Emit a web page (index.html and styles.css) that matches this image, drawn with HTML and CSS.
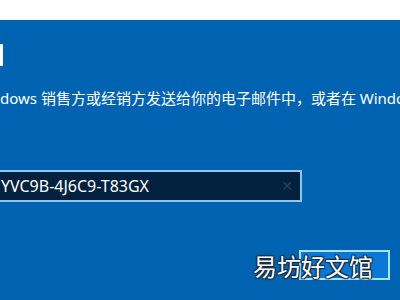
FILE: index.html
```html
<!DOCTYPE html>
<html lang="zh-CN">
  <head>
    <meta charset="UTF-8" />
    <meta name="viewport" content="width=device-width, initial-scale=1.0" />
    <title>输入产品密钥</title>
    <link rel="stylesheet" href="styles.css">
  </head>
  <body>
    <div class="topBar"></div>
    <div class="panel">
      <div class="titleEdge"></div>
      <p class="desc">dows 销售方或经销方发送给你的电子邮件中，或者在 Windows</p>
      <div class="keyBox">
        <span class="keyText">YVC9B-4J6C9-T83GX</span>
        <span class="clearBtn">✕</span>
      </div>
    </div>
    <!-- watermark on top of the shot -->
    <div class="markBox"></div>
    <div class="markText">易坊好文馆</div>
  </body>
</html>
```

FILE: styles.css
```css
html,
body {
  overflow: hidden;
}
body {
  margin: 0;
  width: 400px;
  height: 300px;
  background-color: #0063b1;
  font-family: "Noto Sans", "Noto Sans CJK SC", sans-serif;
  color: #fff;
  position: relative;
}

/* White strip at the top */
.topBar {
  height: 20px;
  background-color: #fff;
}

.panel {
  display: flex;
  flex-direction: column;
}

/* Tail of the clipped title */
.titleEdge {
  margin-top: 24px;
  width: 3px;
  height: 22px;
  background-color: #fff;
  border-radius: 0 1px 1px 0;
}

/* Description line */
.desc {
  margin: 22px 0 0 0;
  font-size: 15px;
  line-height: 20px;
  white-space: nowrap;
}

/* Product key input */
.keyBox {
  margin: 62px 0 0 -10px;
  width: 292px;
  height: 28px;
  border: 2px solid #8fc4ee;
  background-color: #01213f;
  display: flex;
  align-items: center;
  justify-content: space-between;
  padding: 0 7px 0 9px;
  box-sizing: content-box;
}
.keyText {
  font-size: 16px;
  white-space: nowrap;
}
.clearBtn {
  color: #27445f;
  font-size: 14px;
  font-family: "DejaVu Sans", sans-serif;
}

/* Watermark */
.markBox {
  position: absolute;
  left: 299px;
  top: 250px;
  width: 87px;
  height: 26px;
  border: 2px solid #a6e4ff;
  background-color: #0a79d6;
}
.markText {
  position: absolute;
  left: 253px;
  top: 251px;
  font-family: "Noto Sans CJK SC", sans-serif;
  font-size: 24px;
  line-height: 30px;
  color: #fff;
  text-shadow: 1px 1px 1px #1b2b3c, -1px -1px 1px #1b2b3c, 1px -1px 1px #1b2b3c, -1px 1px 1px #1b2b3c;
}
```
